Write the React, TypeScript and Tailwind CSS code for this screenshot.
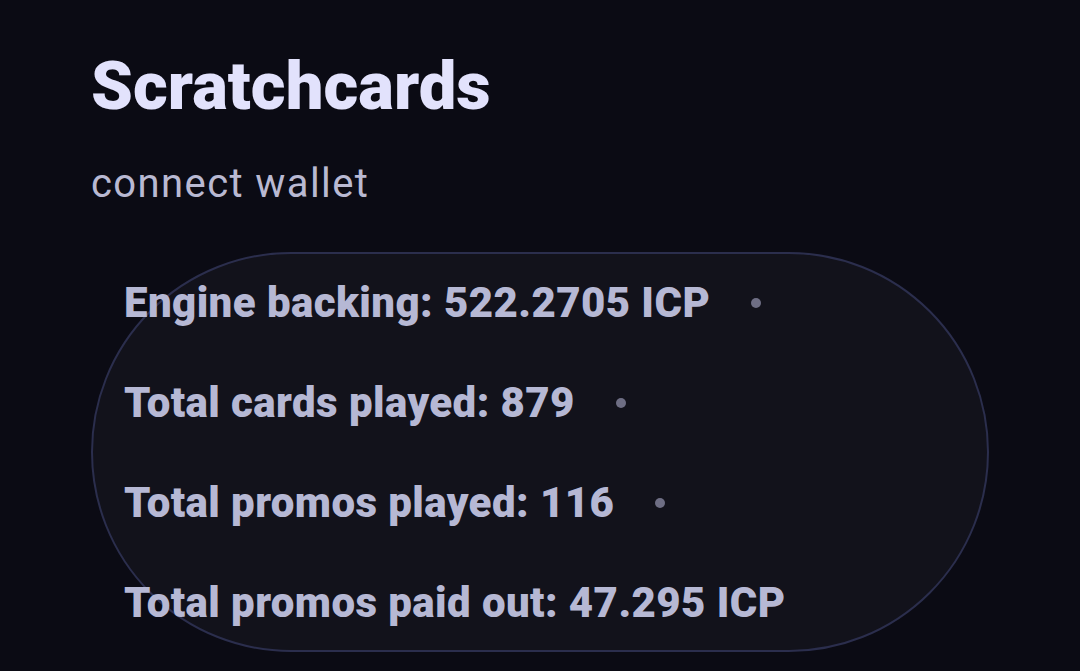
import React from "react";

const items = [
  "Engine backing: 522.2705 ICP",
  "Total cards played: 879",
  "Total promos played: 116",
  "Total promos paid out: 47.295 ICP",
];

export default function App() {
  return (
    <div
      className="min-h-[671px] w-full bg-[#0b0b14] px-[91px] pt-[46px]"
      style={{ fontFamily: "Roboto, 'Noto Sans', sans-serif" }}
    >
      <h1 className="text-[67px] font-black leading-[80px] text-[#e2e2fc]">Scratchcards</h1>
      <p className="mt-[34px] text-[40px] leading-[48px] tracking-[0.035em] text-[#b9b9d2]">connect wallet</p>
      <div className="mt-[44px] flex h-[400px] w-[898px] flex-col gap-[40px] rounded-full border-2 border-[#2b2e4d] bg-[#12121b] px-[31px] pt-[19px]">
        {items.map((t, i) => (
          <div key={t} className="flex items-center">
            <span className="text-[42px] font-black leading-[60px] tracking-[0.01em] text-[#b6b8d4]">{t}</span>
            {i < items.length - 1 && (
              <span className="ml-[41px] h-[10px] w-[10px] rounded-full bg-[#6e6e84]" />
            )}
          </div>
        ))}
      </div>
    </div>
  );
}
